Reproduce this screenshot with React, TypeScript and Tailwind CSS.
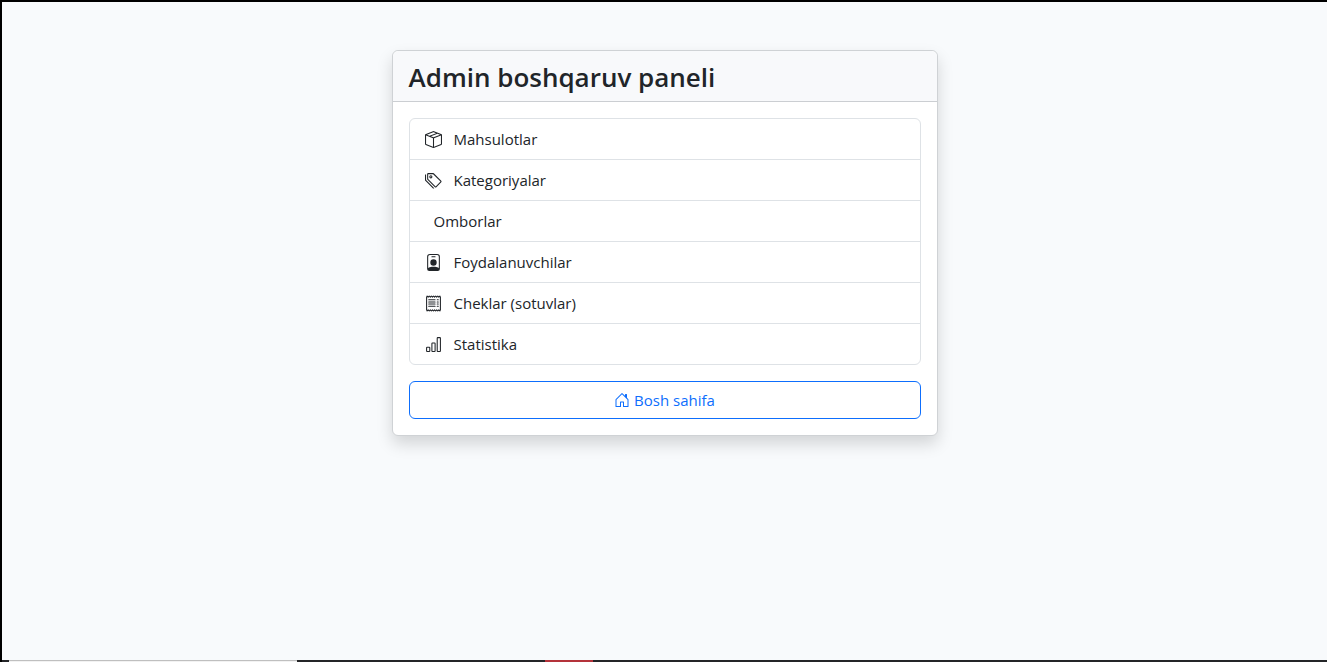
import type { IconType } from 'react-icons';
import { BsBoxSeam, BsTags, BsPersonBadge, BsReceipt, BsBarChart, BsHouseDoor } from 'react-icons/bs';

const links: { label: string; href: string; icon?: IconType }[] = [
  { label: 'Mahsulotlar', href: '#products', icon: BsBoxSeam },
  { label: 'Kategoriyalar', href: '#categories', icon: BsTags },
  { label: 'Omborlar', href: '#warehouses' },
  { label: 'Foydalanuvchilar', href: '#users', icon: BsPersonBadge },
  { label: 'Cheklar (sotuvlar)', href: '#receipts', icon: BsReceipt },
  { label: 'Statistika', href: '#statistics', icon: BsBarChart },
];

export default function App() {
  return (
    <div className="flex min-h-screen flex-col border-l-2 border-t-2 border-black bg-[#f8fafc] font-['Open_Sans',sans-serif] text-[#212529]">
      <main className="w-full flex-1 px-4 pt-12">
        <section className="mx-auto w-full max-w-[546px] rounded-md border border-[#cfd2d5] bg-white shadow-[0_8px_16px_rgba(0,0,0,0.15)]">
          <header className="rounded-t-md border-b border-[#cbced2] bg-[#f8f9fb] px-4 pt-2.5 pb-2">
            <h1 className="text-[26px] leading-8 font-semibold">Admin boshqaruv paneli</h1>
          </header>
          <div className="p-4">
            <nav className="mb-4 divide-y divide-[#dee2e6] rounded-md border border-[#dee2e6]">
              {links.map(({ label, href, icon: Icon }) => (
                <a key={label} href={href} className="flex items-center px-[15px] py-2 text-[15px] leading-6">
                  {Icon ? <Icon className="mr-3 size-[17px]" /> : null}
                  <span className={Icon ? '' : 'ml-[9px]'}>{label}</span>
                </a>
              ))}
            </nav>
            <a
              href="#home"
              className="flex items-center justify-center gap-1 rounded-md border border-[#0d6efd] py-1.5 text-[15px] leading-6 text-[#0d6efd]"
            >
              <BsHouseDoor className="size-4" />
              Bosh sahifa
            </a>
          </div>
        </section>
      </main>
      <footer className="flex h-0.5 bg-[#242528]" aria-hidden="true">
        <div className="ml-[7px] w-[288px] border-t border-[#bfbfbf] bg-[#f2f2f2]" />
        <div className="ml-[248px] w-12 bg-[#b4323a]" />
      </footer>
    </div>
  );
}
